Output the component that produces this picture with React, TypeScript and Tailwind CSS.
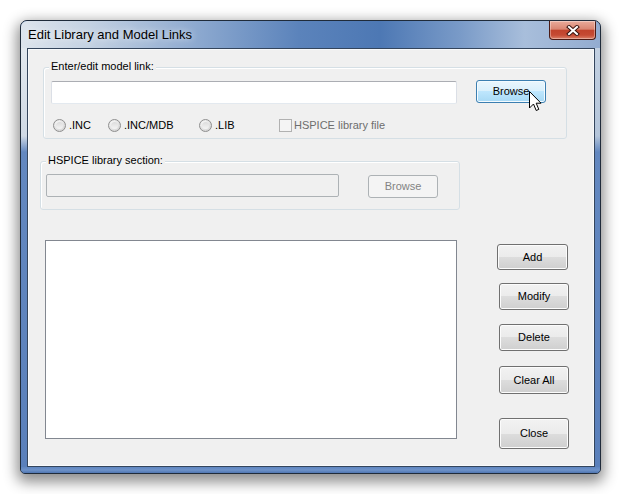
import React from "react";

const font = { fontFamily: '"Liberation Sans", Arial, sans-serif' };

function Btn({ label, cls }: { label: string; cls: string }) {
  return (
    <div
      className={
        "flex items-center justify-center rounded-[3px] border border-[#707070] bg-[linear-gradient(to_bottom,#f2f2f2_0%,#ebebeb_50%,#dddddd_50%,#cfcfcf_100%)] shadow-[inset_0_0_0_1px_#fcfcfc] text-[11px] text-black " +
        cls
      }
    >
      {label}
    </div>
  );
}

function Radio({ label, w }: { label: string; w: string }) {
  return (
    <div className={"flex items-center " + w}>
      <div className="w-[13px] h-[13px] rounded-full border border-[#8f8f8f] bg-[radial-gradient(circle_at_40%_35%,#ffffff_0%,#e6e6e6_45%,#c9c9c9_100%)] flex items-center justify-center">
        <div className="w-[7px] h-[7px] rounded-full bg-[linear-gradient(to_bottom,#dcdcdc,#f4f4f4)]" />
      </div>
      <span className="ml-[3px] text-[11px] text-black">{label}</span>
    </div>
  );
}

export default function App() {
  return (
    <div className="w-[622px] h-[494px] bg-white pt-[20px] pl-[20px]" style={font}>
      <div className="w-[581px] h-[454px] rounded-t-[7px] rounded-b-[5px] border border-[#1f2b3a] shadow-[0_5px_14px_3px_rgba(0,0,0,0.45)] overflow-hidden flex flex-col bg-[#5a80bb]">
        {/* Title bar */}
        <div className="h-[27px] flex items-start bg-[linear-gradient(90deg,#dde4ec_0%,#c3d1e2_12%,#8eaad0_30%,#5b83bb_48%,#4d78b4_62%,#7a9bc8_76%,#a8bedb_87%,#93acd0_100%)]">
          <div className="pl-[7px] pt-[6px] text-[13px] leading-[15px] text-black [text-shadow:0_0_7px_rgba(255,255,255,0.95)]">
            Edit Library and Model Links
          </div>
          <div className="ml-auto mr-[4px] w-[47px] h-[19px] rounded-b-[4px] border border-t-0 border-[#4b1a14] bg-[linear-gradient(to_bottom,#e9ab9b_0%,#d98672_45%,#c1432c_52%,#c54a33_78%,#db8068_100%)] shadow-[inset_0_0_0_1px_rgba(255,255,255,0.35)] flex items-center justify-center">
            <svg width="14" height="11" viewBox="0 0 14 11">
              <path d="M3 2 L11 9 M11 2 L3 9" stroke="#3a1510" strokeWidth="4" strokeLinecap="square" />
              <path d="M3 2 L11 9 M11 2 L3 9" stroke="#ffffff" strokeWidth="2" strokeLinecap="square" />
            </svg>
          </div>
        </div>
        {/* Body */}
        <div className="flex h-[419px]">
          <div className="w-[6px] bg-[linear-gradient(to_bottom,#e2e8ee_0px,#cfd9e5_88px,#6388c0_104px,#5a80bb_100%)]" />
          <div className="w-[568px] h-[419px] border border-[#34455c] bg-[#f0f0f0] shadow-[inset_0_0_0_1px_#f8fafc] flex flex-col">
            {/* Group 1 */}
            <div className="relative ml-[15px] mt-[18px] w-[524px] h-[72px] rounded-[3px] border border-[#d5dfe5] shadow-[inset_1px_1px_0_#ffffff] pl-[7px] pt-[12px]">
              <div className="absolute left-[5px] top-[-8px] px-[2px] bg-[#f0f0f0] text-[11px] leading-[13px] text-black">
                Enter/edit model link:
              </div>
              <div className="flex items-start">
                <div className="mt-[1px] w-[406px] h-[23px] rounded-[2px] bg-white border border-[#abadb3] border-x-[#dbdfe6] border-b-[#e3e9ef]" />
                <div className="relative ml-[19px] w-[70px] h-[23px] rounded-[3px] border border-[#3c7fb1] bg-[linear-gradient(to_bottom,#eaf6fd_0%,#d9f0fc_50%,#bee6fd_50%,#a7d9f5_100%)] shadow-[inset_0_0_0_1px_#f4fbff] flex items-center justify-center text-[11px] text-black">
                  Browse
                  <svg className="absolute left-[52px] top-[10px]" width="13" height="21" viewBox="0 0 13 21">
                    <path d="M0.5 0.5 V17 L4.5 13 L7.2 19.5 L9.8 18.4 L7.2 12.2 H12 Z" fill="#ffffff" stroke="#000000" strokeWidth="1" strokeLinejoin="miter" />
                  </svg>
                </div>
              </div>
              <div className="flex items-center h-[14px] mt-[14px] ml-[2px]">
                <Radio label=".INC" w="w-[55px]" />
                <Radio label=".INC/MDB" w="w-[91px]" />
                <Radio label=".LIB" w="w-[80px]" />
                <div className="flex items-center">
                  <div className="w-[13px] h-[13px] border border-[#b1b1b1] bg-[#f4f4f4]" />
                  <span className="ml-[2px] text-[11px] text-[#6d6d6d]">HSPICE library file</span>
                </div>
              </div>
            </div>
            {/* Group 2 */}
            <div className="relative ml-[12px] mt-[22px] w-[420px] h-[49px] rounded-[3px] border border-[#d5dfe5] shadow-[inset_1px_1px_0_#ffffff] pl-[5px] pt-[12px] flex items-start">
              <div className="absolute left-[5px] top-[-8px] px-[2px] bg-[#f0f0f0] text-[11px] leading-[13px] text-black">
                HSPICE library section:
              </div>
              <div className="w-[293px] h-[23px] rounded-[2px] bg-[#f0f0f0] border border-[#adb2b5]" />
              <div className="ml-[29px] mt-[1px] w-[70px] h-[23px] rounded-[3px] border border-[#adb2b5] bg-[#f4f4f4] flex items-center justify-center text-[11px] text-[#838383]">
                Browse
              </div>
            </div>
            {/* List + buttons */}
            <div className="flex mt-[30px]">
              <div className="ml-[17px] w-[412px] h-[199px] bg-white border border-[#828790]" />
              <div className="ml-[40px] mt-[4px] flex flex-col">
                <Btn label="Add" cls="w-[71px] h-[26px]" />
                <Btn label="Modify" cls="ml-[2px] mt-[13px] w-[70px] h-[27px]" />
                <Btn label="Delete" cls="ml-[2px] mt-[14px] w-[70px] h-[27px]" />
                <Btn label="Clear All" cls="ml-[2px] mt-[15px] w-[70px] h-[28px]" />
                <Btn label="Close" cls="ml-[2px] mt-[24px] w-[70px] h-[31px]" />
              </div>
            </div>
          </div>
          <div className="w-[5px] bg-[linear-gradient(to_bottom,#c2d0e1_0px,#b4c5da_88px,#6388c0_104px,#5a80bb_100%)]" />
        </div>
        <div className="h-[6px] bg-[linear-gradient(to_bottom,#5f86c1_0%,#6e92c8_50%,#4f76b2_100%)]" />
      </div>
    </div>
  );
}
